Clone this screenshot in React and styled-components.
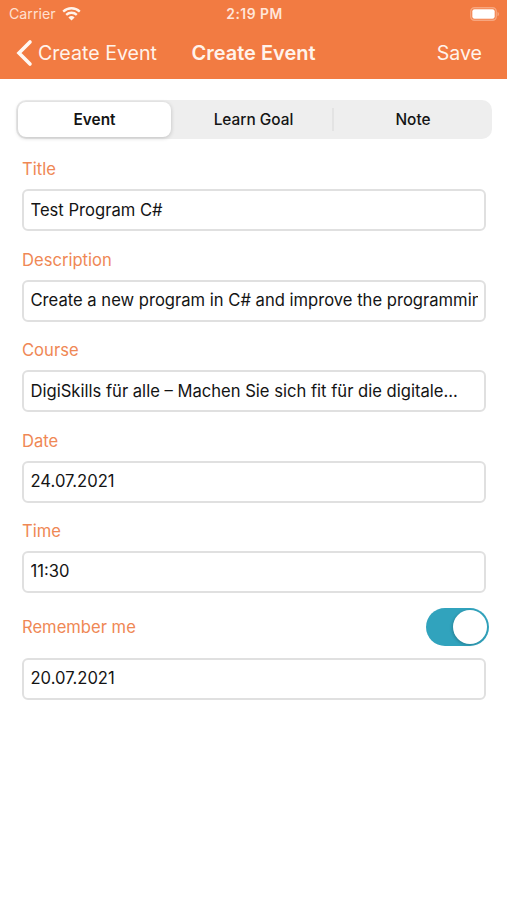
import React from 'react';
import styled, { createGlobalStyle } from 'styled-components';

const Global = createGlobalStyle`
  * { box-sizing: border-box; }
  body { margin: 0; background: #fff; font-family: Inter, "Liberation Sans", sans-serif; color: #141414; }
`;
const Screen = styled.div`
  width: 507px;
  height: 900px;
  overflow: hidden;
  background: #fff;
`;
const Header = styled.header`
  height: 79px;
  background: #f27b42;
  color: #fff3eb;
`;
const StatusBar = styled.div`
  height: 27px;
  display: grid;
  grid-template-columns: 1fr auto 1fr;
  align-items: center;
  padding: 0 7px 0 9px;
`;
const Carrier = styled.div`
  display: flex;
  align-items: center;
  gap: 6px;
  font-size: 14.2px;
  color: #ffe0d0;
`;
const Clock = styled.div`
  font-weight: 600;
  font-size: 13.8px;
  letter-spacing: 0.5px;
  color: #ffe6da;
`;
const StatusEnd = styled.div`
  display: flex;
  justify-content: flex-end;
`;
const NavBar = styled.nav`
  height: 51px;
  display: grid;
  grid-template-columns: 1fr auto 1fr;
  align-items: center;
  padding: 0 25px;
  font-size: 19.6px;
`;
const Back = styled.div`
  display: flex;
  align-items: center;
  gap: 5px;
  margin-left: -9px;
`;
const NavTitle = styled.div`
  font-weight: 600;
  font-size: 20px;
`;
const Save = styled.div`
  text-align: right;
`;
const Segments = styled.div`
  margin: 21px 15px 0 16px;
  height: 39px;
  border-radius: 10px;
  background: #eee;
  display: grid;
  grid-template-columns: 157px 161px 158px;
  padding: 2px 0;
`;
const Segment = styled.div`
  position: relative;
  display: flex;
  align-items: center;
  justify-content: center;
  font-size: 15.4px;
  font-weight: ${p => (p.$active ? 600 : 500)};
  border-radius: 8px;
  margin: ${p => (p.$active ? '0 2px' : '0')};
  background: ${p => (p.$active ? '#fff' : 'transparent')};
  box-shadow: ${p => (p.$active ? '0 1px 4px rgba(0,0,0,.2)' : 'none')};
  &::after {
    content: '';
    display: ${p => (p.$divider ? 'block' : 'none')};
    position: absolute;
    right: 0;
    top: 6px;
    bottom: 6px;
    width: 2px;
    background: #e3e3e3;
  }
`;
const Form = styled.main`
  padding: 10.4px 21px 0 22px;
`;
const Group = styled.div`
  height: 90.4px;
`;
const Label = styled.div`
  height: 40px;
  display: flex;
  align-items: center;
  color: #ef8855;
  font-size: 16.6px;
`;
const Field = styled.div`
  height: 42px;
  border: 2px solid #e0e0e0;
  border-radius: 6px;
  padding: 0 6.5px 1px;
  display: flex;
  align-items: center;
  font-size: 16.6px;
`;
const Value = styled.span`
  white-space: nowrap;
  overflow: hidden;
`;
const Remember = styled.div`
  display: flex;
  justify-content: space-between;
  align-items: center;
  height: 38px;
  margin: 6.6px -3px 12px 0;
`;
const Toggle = styled.div`
  width: 63px;
  height: 38px;
  border-radius: 19px;
  background: #31a3bd;
  padding: 2px;
  display: flex;
  justify-content: flex-end;
`;
const Knob = styled.div`
  width: 34px;
  height: 34px;
  border-radius: 50%;
  background: #fff;
  box-shadow: -1px 1px 3px rgba(0,0,0,.2);
`;

const WifiIcon = () => (
  <svg width="19" height="14" viewBox="0 0 19 14" fill="none" stroke="#fff3eb">
    <path d="M1.2 4.6a12 12 0 0 1 16.6 0" strokeWidth="2.3" />
    <path d="M4.2 7.9a7.6 7.6 0 0 1 10.6 0" strokeWidth="2.3" />
    <path d="M9.5 13.6 6.4 10.4a4.5 4.5 0 0 1 6.2 0Z" fill="#fff3eb" stroke="none" />
  </svg>
);
const BatteryIcon = () => (
  <svg width="30" height="14" viewBox="0 0 30 14">
    <rect x=".75" y=".75" width="25.5" height="12.5" rx="3.7" fill="none" stroke="#f7a67f" strokeWidth="1.3" />
    <rect x="2.3" y="2.3" width="22.4" height="9.4" rx="2.2" fill="#fff" />
    <path d="M27.5 4.7a2.5 2.5 0 0 1 0 4.6Z" fill="#f7a67f" />
  </svg>
);
const BackIcon = () => (
  <svg width="17" height="28" viewBox="0 0 17 28" fill="none" stroke="#fff8f3" strokeWidth="3.6" strokeLinecap="round">
    <path d="M14 3 3 14l11 11" />
  </svg>
);

const fields = [
  ['Title', 'Test Program C#'],
  ['Description', 'Create a new program in C# and improve the programming'],
  ['Course', 'DigiSkills für alle – Machen Sie sich fit für die digitale...'],
  ['Date', '24.07.2021'],
  ['Time', '11:30'],
];

export default function App() {
  return (
    <Screen>
      <Global />
      <Header>
        <StatusBar>
          <Carrier>Carrier<WifiIcon /></Carrier>
          <Clock>2:19 PM</Clock>
          <StatusEnd><BatteryIcon /></StatusEnd>
        </StatusBar>
        <NavBar>
          <Back><BackIcon />Create Event</Back>
          <NavTitle>Create Event</NavTitle>
          <Save>Save</Save>
        </NavBar>
      </Header>
      <Segments>
        <Segment $active>Event</Segment>
        <Segment $divider>Learn Goal</Segment>
        <Segment>Note</Segment>
      </Segments>
      <Form>
        {fields.map(([label, value]) => (
          <Group key={label}>
            <Label>{label}</Label>
            <Field><Value>{value}</Value></Field>
          </Group>
        ))}
        <Remember>
          <Label>Remember me</Label>
          <Toggle><Knob /></Toggle>
        </Remember>
        <Field><Value>20.07.2021</Value></Field>
      </Form>
    </Screen>
  );
}
